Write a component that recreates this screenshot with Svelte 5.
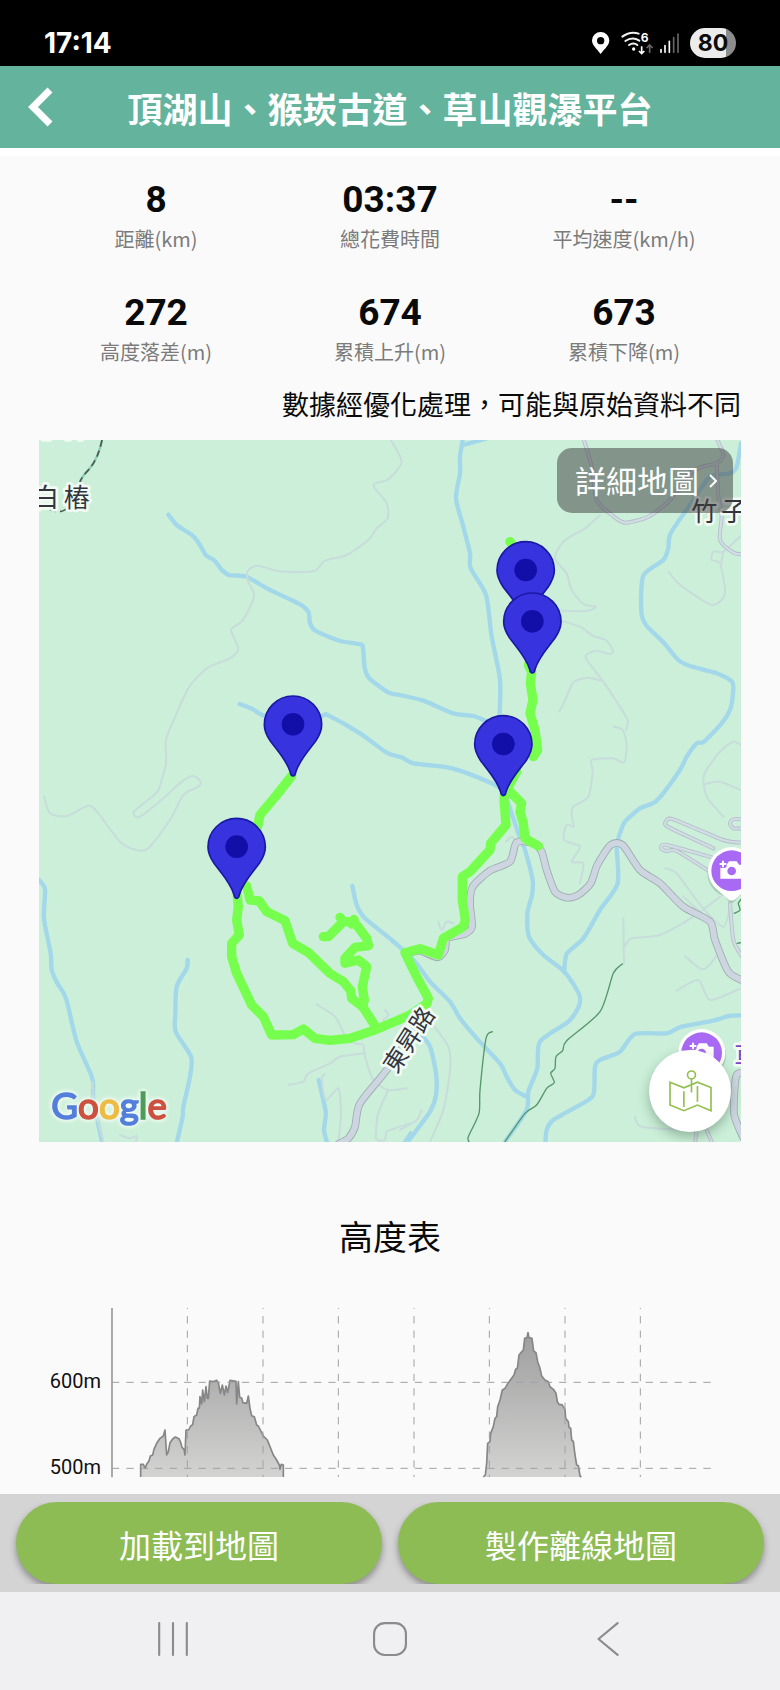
<script>
  const stats = [
    { value: '8', label: '距離(km)' },
    { value: '03:37', label: '總花費時間' },
    { value: '--', label: '平均速度(km/h)' },
    { value: '272', label: '高度落差(m)' },
    { value: '674', label: '累積上升(m)' },
    { value: '673', label: '累積下降(m)' }
  ];

  // The map is divided into four tiles; each line is stored in the coordinates of its tile.
  const origin = { nw: [-27, -30], ne: [1083, -30], sw: [-27, 1020], se: [1083, 1020] };

  function points(tile, text) {
    const [ox, oy] = origin[tile];
    return text.split(' ').map((pair) => {
      const [x, y] = pair.split(',').map(Number);
      return [x + ox, y + oy];
    });
  }

  function straight([tile, text]) {
    return 'M' + points(tile, text).map((p) => p.join(' ')).join('L');
  }

  // Catmull-Rom spline through the points
  function smooth([tile, text]) {
    const p = points(tile, text);
    let d = `M${p[0][0]} ${p[0][1]}`;
    for (let i = 0; i < p.length - 1; i++) {
      const a = p[i - 1] ?? p[i];
      const b = p[i];
      const c = p[i + 1];
      const e = p[i + 2] ?? c;
      const k = 8;
      d += `C${b[0] + (c[0] - a[0]) / k} ${b[1] + (c[1] - a[1]) / k} ${c[0] - (e[0] - b[0]) / k} ${c[1] - (e[1] - b[1]) / k} ${c[0]} ${c[1]}`;
    }
    return d;
  }

  const rivers = [
    ['nw', '415,254 440,285 487,316 508,342 528,376 553,391 575,419 597,435 649,440 712,476 780,508 815,526 836,548 840,580 858,603 931,633 992,643 999,655 1004,712 1017,744 1074,787 1110,795 1180,812 1270,850 1330,858 1372,875 1410,890'],
    ['nw', '629,822 665,836 700,856 800,880 880,856 895,856 990,910 1070,968 1115,982 1150,1000 1240,1010 1290,1022 1390,1062 1420,1080'],
    ['ne', '190,20 180,80 180,130 168,205 190,290 210,370 212,415 258,495 275,620 300,750 298,880'],
    ['ne', '190,45 260,25'],
    ['se', '310,10 325,70 345,130 362,180 375,210 398,300 396,345 382,400 387,470 430,525 495,577 538,645 536,680 505,725 420,785 412,865 385,935 380,990 315,1085'],
    ['ne', '1023,40 1010,110 990,130 930,140 880,210 812,310 805,355 790,390 730,437 724,545 738,585 790,637 835,690 870,708 950,730 997,757 998,800 990,840 965,880 912,935 890,940 860,980 838,1023 770,1112 720,1135 675,1175 660,1210 650,1250 653,1360 600,1440 550,1525 500,1572 493,1627'],
    ['sw', '27,300 45,328 42,415 62,520 65,570 82,610 108,655 140,785 187,895 190,960 217,1090'],
    ['sw', '473,540 470,565 440,620 436,700 437,755 483,830 480,890 460,980 458,1010 440,1090'],
    ['sw', '866,900 887,995 882,1050 892,1090'],
    ['sw', '967,318 980,375 1005,415 1085,480 1155,545 1200,605 1260,665 1290,715 1340,775 1410,850 1430,890 1455,930 1490,950'],
    ['se', '60,760 90,800 108,880 108,945 90,995 20,1090'],
    ['se', '1025,706 985,708 940,722 845,740 800,760 705,762 660,815 600,840 585,860 582,935 565,960 460,1020 440,1050 436,1090'],
    ['sw', '1122,1090 1142,1060']
  ].map(smooth);

  const lanes = [
    ['nw', '1082,30 1115,95 1075,148 1030,165 1070,220 1073,265 1040,295 1015,330 950,375 885,392 850,424 750,424 682,407 652,425 655,455 672,490 665,520 635,575 603,600 625,655 600,685 535,712 478,770 440,850 408,930 408,1000 385,1080 360,1105 312,1145 320,1162 345,1150 400,1105 455,1055 490,1038 512,1055 505,1070 460,1095 420,1170 355,1255 320,1260 270,1235 205,1150 175,1127 110,1158 60,1150 42,1100'],
    ['ne', '600,255 555,295 490,335 465,385 500,430 515,480 550,522 588,530 560,543 485,542'],
    ['ne', '485,573 540,590 580,618 620,632 640,665 625,672 590,662 557,682 610,755 650,815 683,870 678,900'],
    ['ne', '605,752 560,743 520,757 500,800 478,845'],
    ['ne', '640,890 668,900 680,945 672,998 640,985 575,990 578,1025 565,1100 520,1130 515,1155 522,1190 500,1185 492,1230 540,1250 515,1295 550,1300 540,1360'],
    ['ne', '807,427 835,460 890,500 935,525 965,510 975,480 960,400 935,390 940,365 970,365 1022,318'],
    ['ne', '970,365 962,410'],
    ['ne', '1023,945 1000,935 960,965 912,1035 920,1100 970,1160'],
    ['ne', '912,1063 960,1055 1022,1080'],
    ['se', '670,415 672,550'],
    ['se', '670,505 695,475 780,465 880,410 960,350'],
    ['se', '795,265 830,280 905,380 970,440 990,380'],
    ['se', '850,350 900,395'],
    ['se', '855,528 910,568 960,515'],
    ['se', '830,632 895,600 930,660 1022,625'],
    ['se', '115,425 125,450 140,425 160,430'],
    ['se', '318,185 335,170 345,180'],
    ['se', '705,1010 725,1040 860,1050'],
    ['se', '0,1050 50,1020 65,990'],
    ['se', '100,735 145,800 150,870 130,990 90,1085'],
    ['sw', '860,673 915,710 945,765 975,790 1000,795 1005,830 1030,900 1075,930 1130,925'],
    ['sw', '1005,820 930,830 900,850 835,880 820,905 775,915'],
    ['sw', '1065,690 1075,705 1060,720'],
    ['sw', '885,882 875,895 888,960 925,925 933,1000 925,1085'],
    ['sw', '1075,930 1045,1000 1038,1075 1065,1080 1070,1055 1110,1040 1140,1030'],
    ['sw', '187,905 192,970 220,1085'],
    ['sw', '270,1065 300,1075 320,1068 318,1085']
  ].map(smooth);

  const streets = [
    ['ne', '550,25 575,110 590,210 635,255 675,278 745,260 810,210 860,140 900,112 950,100 970,75 950,25'],
    ['ne', '950,100 955,200 965,260 960,330 1000,368 1028,373'],
    ['se', '1028,188 970,180 820,118 798,125 806,142 940,205'],
    ['se', '1028,118 1000,118 990,130 1000,145 1028,145'],
    ['se', '935,232 800,195 783,205 800,213 830,213 925,272'],
    ['se', '990,370 1000,480 1026,530'],
    ['se', '890,1050 885,1090'],
    ['se', '920,1050 937,1090']
  ].map(smooth);

  const highways = [
    ['sw', '1190,700 1070,870 990,970 975,1040 955,1075 925,1092'],
    ['se', '25,520 60,512 112,532 135,510 142,475 195,461 216,440 210,370 218,320 270,272 330,245 350,187 400,190 425,215 440,270 465,335 500,353 535,345 572,310 592,255 632,195 668,195 720,270 780,310 850,380 930,425 945,480 985,575 1028,602'],
    ['se', '1028,878 1008,890 1002,1000 1028,1070']
  ].map(smooth);

  const trails = [
    ['se', '667,552 640,580 600,695 500,782 488,812 468,830 465,865 452,880 463,908 440,925 410,975 375,1000 315,1085'],
    ['se', '277,755 258,775 240,930 237,1000 205,1070 207,1085'],
    ['se', '1023,358 1015,370 1020,390 1003,400'],
    ['se', '1012,490 1023,488']
  ].map(smooth);

  const track = [
    ['sw', '785,-12 740,45 690,105 683,140'],
    ['sw', '622,345 625,380 620,420 628,465 605,490 605,530 620,580 665,675 700,710 725,765 790,764 820,747 855,775 900,781 960,775 1040,748 1140,705 1190,672 1195,655 1160,590 1125,518 1170,506 1225,525 1240,475 1300,440 1306,420 1297,360 1297,290 1320,275 1380,210 1382,190 1428,135 1422,60 1425,20'],
    ['sw', '650,318 660,360 688,363 710,395 765,422 788,490 835,517 900,580 940,605 962,632 965,655 998,680 1040,745'],
    ['sw', '998,680 1003,660 997,620 1010,560 985,540 945,550 945,535 975,502 1016,497 1010,475 972,425 940,425 895,470 880,470'],
    ['sw', '930,412 940,425'],
    ['sw', '972,418 965,432'],
    ['se', '330,35 365,70 360,95 370,130 375,175 415,198'],
    ['ne', '385,705 395,725 391,760 399,810 390,850 405,900 413,960 400,980'],
    ['ne', '350,1025 325,1070'],
    ['ne', '330,335 340,350']
  ].map(straight);

  const pins = [
    ['nw', '789,884'],
    ['ne', '377,421'],
    ['ne', '397,575'],
    ['ne', '310,943'],
    ['sw', '620,201']
  ].map(([tile, at]) => points(tile, at)[0]);

  const cameras = [[2078, 1292], [1988, 1838]];

  const profiles = [
    'M305 507V469H313L318 481L323 469L330 459L334 444L341 441L345 424L353 406L363 391L373 384L378 366L383 441L388 431L393 404L401 393L409 387L420 392L426 406L429 418L435 424L438 441L441 366H449L455 354L461 350L465 326L473 321L477 301L481 300L483 266L488 288L491 246L496 281L501 236L505 271H508L512 219L521 221L533 217L538 224L544 256L550 231L556 261L561 234L566 254L573 217L591 220L593 288L598 221L602 268L608 270L612 284L623 286L628 264L633 301L638 323L646 326L653 351L658 354L673 384L685 396L695 421L703 441L713 456L721 471L723 484L727 469L733 471V507',
    'M1333 507L1339 501L1343 466L1346 406L1353 401L1355 376L1363 356L1368 331L1373 326L1376 296L1383 276L1390 246L1398 241L1408 224L1418 211L1425 201L1430 184L1435 181L1440 141L1446 134L1453 126L1457 91L1464 89L1467 74L1470 89L1479 91L1484 129L1491 134L1496 161L1503 181L1508 204L1518 216L1528 221L1533 236L1543 244L1551 256L1555 281L1561 290H1569L1578 304L1580 331L1588 341L1590 358L1595 361L1598 396L1603 400L1608 441L1613 471L1618 473L1623 504L1627 507'
  ];
  const columns = [445, 672, 898, 1125, 1351, 1578, 1804];

  const logo = [
    ['G', '#557fdb'],
    ['o', '#cc5140'],
    ['o', '#eebb45'],
    ['g', '#557fdb'],
    ['l', '#4d9c57'],
    ['e', '#cc5140']
  ];
</script>

<div class="screen">
  <div class="status">
    <time>17:14</time>
    <div class="indicators">
      <svg class="signals" viewBox="30 24 273 90" aria-hidden="true">
        <path fill="#fff" fill-rule="evenodd" d="M62 102C49 85 36 76 36 61a26 25 0 0 1 52 0C88 76 75 85 62 102ZM62 51a11 11 0 1 0 0 22 11 11 0 0 0 0-22Z" />
        <g fill="none" stroke="#f2f2f2" stroke-width="6" stroke-linecap="round">
          <path d="M127 50Q151 32 176 41M136 63Q157 49 178 62M147 75Q161 66 172 75" />
        </g>
        <circle cx="161" cy="87" r="5" fill="#fff" />
        <text x="182" y="66" class="wifi-gen">6</text>
        <path d="M185 79V100M177 93l8 8 8-8" fill="none" stroke="#fff" stroke-width="5" />
        <path d="M209 99V76M200 84l9-9 9 9" fill="none" stroke="#666" stroke-width="5" />
        <g stroke-width="5" stroke-linecap="round">
          <path d="M243 89V97M255 77V97M268 64V97" stroke="#fff" />
          <path d="M281 53V97M294 42V97" stroke="#666" />
        </g>
      </svg>
      <span class="battery">80</span>
    </div>
  </div>

  <header>
    <button class="back" aria-label="返回">
      <svg viewBox="0 0 26 40"><path d="M23 3L6 20L23 37" fill="none" stroke="#fff" stroke-width="7" /></svg>
    </button>
    <h1>頂湖山、猴崁古道、草山觀瀑平台</h1>
  </header>

  <main>
    <dl class="stats">
      {#each stats as stat}
        <div>
          <dt>{stat.label}</dt>
          <dd>{stat.value}</dd>
        </div>
      {/each}
    </dl>
    <p class="note">數據經優化處理，可能與原始資料不同</p>

    <div class="map">
      <svg viewBox="0 0 2106 2106" role="img" aria-label="路線地圖">
        <rect width="2106" height="2106" fill="#cbefd8" />
        <g class="lines">
          {#each rivers as d}<path {d} stroke="#a2d8e9" stroke-width="13" />{/each}
          {#each lanes as d}<path {d} stroke="#c8dcdb" stroke-width="6" />{/each}
          {#each streets as d}<path {d} stroke="#b5bdcb" stroke-width="12" />{/each}
          {#each streets as d}<path {d} stroke="#d0dde2" stroke-width="7" />{/each}
          {#each highways as d}<path {d} stroke="#9eaaaf" stroke-width="23" />{/each}
          {#each highways as d}<path {d} stroke="#cdd6e0" stroke-width="18" />{/each}
          {#each trails as d}<path {d} stroke="#55966a" stroke-width="4" />{/each}
          <path d="M189 0Q178 55 150 88Q128 110 122 128" stroke="#8fcdb5" stroke-width="7" />
          <path d="M189 0Q178 55 150 88Q128 110 122 128M32 208Q60 222 80 208" class="dashes" />
          <path d="M10 0H34M80 0H94M118 0H130" stroke="#f1fbf4" stroke-width="10" />
          {#each track as d}<path {d} stroke="#76ff4c" stroke-width="28" />{/each}
        </g>
        <g class="labels">
          <text x="-18" y="200">白</text>
          <text x="74" y="200">樁</text>
          <text x="1957" y="243">竹</text>
          <text x="2046" y="243">子</text>
          <text class="road" transform="translate(1108 1798) rotate(-57)" text-anchor="middle" y="28">東昇路</text>
          <text class="poi" x="2086" y="1878">草</text>
        </g>
        {#each cameras as [x, y]}
          <g transform="translate({x} {y})">
            <path d="M-22 72A73 73 0 1 1 22 72L8 88Q0 96-8 88Z" fill="#8cae9b" opacity=".5" transform="translate(0 5)" />
            <path d="M-45 55A71 71 0 1 1 45 55L12 85Q0 94-12 85Z" fill="#fff" />
            <circle r="61" fill="#a86af4" />
            <path d="M-34-18H-15L-8-28H15L22-18H36V24H-34Z" fill="#fff" />
            <path d="M-26-31V-8M-37-20H-15" stroke="#a86af4" stroke-width="16" />
            <path d="M-26-30V-10M-36-20H-16" stroke="#fff" stroke-width="6" />
            <circle r="13" cy="1" fill="#a86af4" />
          </g>
        {/each}
        {#each pins as [x, y]}
          <g transform="translate({x} {y})">
            <path
              d="M0 154C-4 154-7 150-8 143C-18 108-45 80-68 49C-80 31-86 18-86 0A86 86 0 0 1 86 0C86 18 80 31 68 49C45 80 18 108 8 143C7 150 4 154 0 154Z"
              fill="#3733df" stroke="#1b18a3" stroke-width="5" />
            <circle r="34" cy="-1" fill="#120fa9" />
          </g>
        {/each}
        <text class="logo" x="37" y="2036">{#each logo as [letter, color]}<tspan fill={color} stroke={color}>{letter}</tspan>{/each}</text>
      </svg>

      <button class="detail">
        詳細地圖
        <svg viewBox="0 0 8 14" aria-hidden="true"><path d="M1 1L7 7L1 13" fill="none" stroke="#fff" stroke-width="2" /></svg>
      </button>
      <button class="layers" aria-label="切換地圖">
        <svg viewBox="0 0 130 126" fill="none" stroke="#93bf50" stroke-width="5">
          <path d="M3 37L45 54L86 37L127 53V123L86 106L45 123L3 106ZM45 64V112M86 48V96M68 27V68" />
          <circle cx="68" cy="15" r="12" />
        </svg>
      </button>
    </div>

    <h2>高度表</h2>
    <svg class="chart" viewBox="0 0 2106 510" role="img" aria-label="高度表">
      <defs>
        <linearGradient id="slope" gradientUnits="userSpaceOnUse" x1="0" y1="74" x2="0" y2="507">
          <stop offset="0" stop-color="#9e9e9e" />
          <stop offset="1" stop-color="#d3d3d2" />
        </linearGradient>
      </defs>
      {#each profiles as d}
        <path d={d + 'Z'} fill="url(#slope)" />
        <path {d} fill="none" stroke="#868686" stroke-width="5" stroke-linejoin="round" />
      {/each}
      <g class="grid">
        {#each columns as x}<path d="M{x} 0V507" stroke-dashoffset="19" />{/each}
        <path d="M219 223H2016M219 481H2016" />
      </g>
      <path d="M219 0V508" stroke="#9a9a9a" stroke-width="5" />
      <text x="186" y="240">600m</text>
      <text x="186" y="499">500m</text>
    </svg>
  </main>

  <div class="actions">
    <button>加載到地圖</button>
    <button>製作離線地圖</button>
  </div>

  <nav>
    <button aria-label="最近使用">
      <svg viewBox="0 0 32 32"><path d="M3 1V31M16 1V31M29 1V31" /></svg>
    </button>
    <button aria-label="主畫面">
      <svg viewBox="0 0 32 32"><rect x="1" y="1" width="30" height="30" rx="10" /></svg>
    </button>
    <button aria-label="返回上一頁">
      <svg viewBox="0 0 32 32"><path d="M26 1L8 16L26 31" /></svg>
    </button>
  </nav>
</div>

<style>
  :global(body) {
    margin: 0;
    background: #fafafa;
  }

  .screen {
    display: flex;
    flex-direction: column;
    min-height: 100vh;
    overflow: hidden;
    color: #0a0a0a;
    font-family: Roboto, 'Noto Sans CJK TC', sans-serif;
  }

  button {
    padding: 0;
    border: 0;
    background: none;
    color: #fff;
    font-family: inherit;
    cursor: pointer;
  }

  svg {
    display: block;
  }

  .status {
    display: flex;
    align-items: center;
    justify-content: space-between;
    height: 46px;
    padding: 20px 44px 0;
    background: #000;
    color: #fff;
  }

  time {
    font: 700 28px/32px Inter, sans-serif;
  }

  .indicators {
    display: flex;
    align-items: center;
    gap: 9px;
  }

  .signals {
    width: 91px;
    height: 30px;
  }

  .wifi-gen {
    fill: #fff;
    font: 700 36px Inter, sans-serif;
  }

  .battery {
    width: 46px;
    border-radius: 15px;
    background: linear-gradient(90deg, #ececec 36px, #8c8c8c 36px);
    color: #0b0b0b;
    font: 700 23px/30px Inter, sans-serif;
    text-align: center;
  }

  header {
    display: grid;
    grid-template-columns: 78px 1fr 78px;
    align-items: center;
    height: 82px;
    border-bottom: 8px solid #fff;
    background: #63b39d;
  }

  .back svg {
    width: 26px;
    margin-left: 27px;
  }

  h1 {
    margin: 0;
    padding-top: 10px;
    color: #fff;
    font-size: 35px;
    font-weight: 700;
    line-height: 52px;
    text-align: center;
    white-space: nowrap;
  }

  main {
    flex: 1;
    padding: 22px 5% 16px;
  }

  .stats {
    display: grid;
    grid-template-columns: repeat(3, 1fr);
    gap: 36px 0;
    margin: 0;
    text-align: center;
  }

  .stats div {
    display: flex;
    flex-direction: column-reverse;
  }

  dt {
    color: #7b7b7b;
    font: 20px/33px 'Noto Sans CJK TC', sans-serif;
  }

  dd {
    margin: 0;
    font-size: 37px;
    font-weight: 700;
    line-height: 44px;
  }

  .note {
    margin: 18px 0 14px;
    font-size: 27px;
    line-height: 40px;
    text-align: right;
  }

  .map {
    position: relative;
    overflow: hidden;
  }

  .map > svg {
    width: 100%;
  }

  .lines path {
    fill: none;
    stroke-linejoin: round;
    stroke-linecap: round;
  }

  .lines .dashes {
    stroke: #4c5a58;
    stroke-width: 5;
    stroke-dasharray: 20 12;
    stroke-linecap: butt;
  }

  .labels text {
    fill: #33353d;
    stroke: #f1fbf4;
    stroke-width: 16px;
    stroke-linejoin: round;
    paint-order: stroke;
    font: 78px 'Noto Sans CJK TC', sans-serif;
  }

  .labels .road {
    font-size: 72px;
  }

  .labels .poi {
    fill: #7a45c4;
  }

  .logo {
    stroke-width: 5px;
    font: 400 110px Lato, sans-serif;
    filter: drop-shadow(0 0 6px #f4fcf7) drop-shadow(0 0 6px #f4fcf7);
  }

  .detail {
    position: absolute;
    top: 8px;
    right: 8px;
    display: flex;
    align-items: center;
    gap: 10px;
    padding: 12px 16px 8px 18px;
    border-radius: 15px;
    background: rgba(60, 60, 60, 0.5);
    font-size: 31px;
    line-height: 45px;
  }

  .detail svg {
    width: 8px;
    margin-bottom: 4px;
  }

  .layers {
    position: absolute;
    right: 10px;
    bottom: 10px;
    display: grid;
    place-items: center;
    width: 82px;
    height: 82px;
    border-radius: 50%;
    background: #fff;
    box-shadow: 0 5px 12px rgba(40, 70, 50, 0.35);
  }

  .layers svg {
    width: 43px;
  }

  h2 {
    margin: 71px 0 45px;
    font-size: 34px;
    font-weight: 400;
    line-height: 50px;
    text-align: center;
  }

  .chart {
    width: 100%;
  }

  .chart text {
    fill: #111;
    font-size: 60px;
    text-anchor: end;
  }

  .grid path {
    stroke: #a0a0a0;
    stroke-width: 3;
    stroke-dasharray: 22 21.27;
  }

  .actions {
    display: grid;
    grid-template-columns: 1fr 1fr;
    gap: 16px;
    overflow: hidden;
    padding: 0 16px;
    border: solid #d4d4d4;
    border-width: 8px 0;
    background: #d4d4d4;
  }

  .actions button {
    padding: 21px 0 13px;
    border-radius: 41px;
    background: #8dbc55;
    box-shadow: 0 4px 7px rgba(0, 0, 0, 0.35);
    font-size: 32px;
    line-height: 48px;
  }

  nav {
    display: grid;
    grid-template-columns: repeat(3, 1fr);
    padding: 30px 64px 34px;
    background: #f0f0f2;
  }

  nav svg {
    width: 34px;
    margin: 0 auto;
    fill: none;
    stroke: #8b8b8b;
    stroke-width: 2;
    stroke-linecap: round;
    stroke-linejoin: round;
  }
</style>
